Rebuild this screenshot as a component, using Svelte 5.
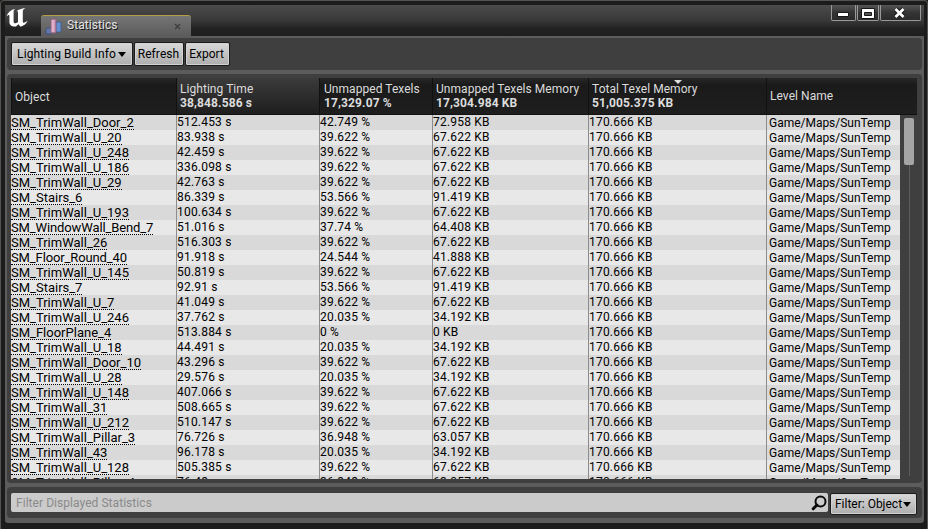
<script>
  const level = 'Game/Maps/SunTemp';
  const total = '170.666 KB';
  const rows = [
    ['SM_TrimWall_Door_2', '512.453 s', '42.749 %', '72.958 KB'],
    ['SM_TrimWall_U_20', '83.938 s', '39.622 %', '67.622 KB'],
    ['SM_TrimWall_U_248', '42.459 s', '39.622 %', '67.622 KB'],
    ['SM_TrimWall_U_186', '336.098 s', '39.622 %', '67.622 KB'],
    ['SM_TrimWall_U_29', '42.763 s', '39.622 %', '67.622 KB'],
    ['SM_Stairs_6', '86.339 s', '53.566 %', '91.419 KB'],
    ['SM_TrimWall_U_193', '100.634 s', '39.622 %', '67.622 KB'],
    ['SM_WindowWall_Bend_7', '51.016 s', '37.74 %', '64.408 KB'],
    ['SM_TrimWall_26', '516.303 s', '39.622 %', '67.622 KB'],
    ['SM_Floor_Round_40', '91.918 s', '24.544 %', '41.888 KB'],
    ['SM_TrimWall_U_145', '50.819 s', '39.622 %', '67.622 KB'],
    ['SM_Stairs_7', '92.91 s', '53.566 %', '91.419 KB'],
    ['SM_TrimWall_U_7', '41.049 s', '39.622 %', '67.622 KB'],
    ['SM_TrimWall_U_246', '37.762 s', '20.035 %', '34.192 KB'],
    ['SM_FloorPlane_4', '513.884 s', '0 %', '0 KB'],
    ['SM_TrimWall_U_18', '44.491 s', '20.035 %', '34.192 KB'],
    ['SM_TrimWall_Door_10', '43.296 s', '39.622 %', '67.622 KB'],
    ['SM_TrimWall_U_28', '29.576 s', '20.035 %', '34.192 KB'],
    ['SM_TrimWall_U_148', '407.066 s', '39.622 %', '67.622 KB'],
    ['SM_TrimWall_31', '508.665 s', '39.622 %', '67.622 KB'],
    ['SM_TrimWall_U_212', '510.147 s', '39.622 %', '67.622 KB'],
    ['SM_TrimWall_Pillar_3', '76.726 s', '36.948 %', '63.057 KB'],
    ['SM_TrimWall_43', '96.178 s', '20.035 %', '34.192 KB'],
    ['SM_TrimWall_U_128', '505.385 s', '39.622 %', '67.622 KB'],
    ['SM_TrimWall_Pillar_4', '76.48 s', '36.948 %', '63.057 KB']
  ];
  const headers = [
    ['Object', ''],
    ['Lighting Time', '38,848.586 s'],
    ['Unmapped Texels', '17,329.07 %'],
    ['Unmapped Texels Memory', '17,304.984 KB'],
    ['Total Texel Memory', '51,005.375 KB'],
    ['Level Name', '']
  ];
  const tight = (name) => /Bend|Round/.test(name);
</script>

<div class="window">
  <div class="titlebar">
    <svg class="logo" width="23" height="20" viewBox="0 0 23 20">
      <path d="M0.4 8.6C1.8 4.6 4.8 1.7 9.4 0.8C7.9 1.8 7.6 2.5 7.6 4V13.4C7.6 15.6 9.8 15.8 12 13.9V4.6C12 3.2 11.4 2.9 10.4 3.4C12.6 1.4 15.4 0.9 19.4 0.1C17.2 1.6 16.8 2.2 16.8 3.8V13.2C16.8 15.4 18.6 15.2 21.8 12.6C20 16.4 17.6 17.9 14.6 18.7L12.4 16.3L10 18.5C5.8 18.9 3.4 16.9 3.4 13.9V7.7C3.4 6.4 1.8 6.7 0.4 8.6Z" />
    </svg>
    <div class="tab">
      <svg width="18" height="18" viewBox="0 0 18 18">
        <path d="M1 12l1-1h5v5l-1 1H1z" fill="#6177a9" stroke="#34476f" stroke-width=".7" />
        <path d="M11 6l1-1h4v9l-1 1h-4z" fill="#6590d0" stroke="#385887" stroke-width=".7" />
        <path d="M6 3l1-1h4v13l-1 1H6z" fill="#b97f9f" stroke="#8f6384" stroke-width=".7" />
        <path d="M6.6 3h3v12h-3z" fill="#e0afc9" />
      </svg>
      <span>Statistics</span>
      <svg class="tabclose" width="7" height="7" viewBox="0 0 7 7"><path d="M1 1l5 5M6 1L1 6" /></svg>
    </div>
    <div class="controls">
      <div><svg width="12" height="5" viewBox="0 0 12 5"><path d="M.5.5h11v4H.5z" fill="#fff" stroke="#161616" /></svg></div>
      <div><svg width="14" height="11" viewBox="0 0 14 11"><path d="M.5.5h13v10H.5z" fill="#fff" stroke="#161616" /><path d="M3.5 4.5h7v3h-7z" fill="#555" stroke="#161616" /></svg></div>
      <div><svg width="13" height="12" viewBox="0 0 13 12"><path d="M2.5 2l8 8M10.5 2l-8 8" stroke="#161616" stroke-width="4.8" /><path d="M2.5 2l8 8M10.5 2l-8 8" stroke="#fff" stroke-width="2.8" /></svg></div>
    </div>
  </div>

  <div class="body">
    <div class="panel toolbar">
      <button class="info">Lighting Build Info<i></i></button>
      <button class="refresh">Refresh</button>
      <button class="export">Export</button>
    </div>

    <div class="panel main">
      <div class="head cols">
        {#each headers as [name, sum], i}
          <div class="h" class:lit={i === 1} class:wide={i === 2}>
            <span>{name}</span>
            {#if sum}<b>{sum}</b>{/if}
            {#if i === 4}<em></em>{/if}
          </div>
        {/each}
      </div>
      <div class="area">
        <div class="list">
          {#each rows as r}
            <div class="row cols">
              <div class="c obj" class:tight={tight(r[0])}><span>{r[0]}</span></div>
              <div class="c">{r[1]}</div>
              <div class="c">{r[2]}</div>
              <div class="c">{r[3]}</div>
              <div class="c">{total}</div>
              <div class="c lvl">{level}</div>
            </div>
          {/each}
        </div>
        <div class="scroll"><div class="thumb"></div><div class="track"></div></div>
      </div>
    </div>

    <div class="panel foot">
      <div class="search">
        <span>Filter Displayed Statistics</span>
        <svg width="16" height="16" viewBox="0 0 16 16"><circle cx="9.5" cy="6.4" r="5" fill="none" stroke="#0a0a0a" stroke-width="2" /><path d="M6 10L2.2 13.8" stroke="#0a0a0a" stroke-width="3" stroke-linecap="round" /></svg>
      </div>
      <button class="filter">Filter: Object<i></i></button>
    </div>
  </div>
</div>

<style>
  :global(body) { margin: 0; background: #1b1b1b; }
  .window {
    width: 928px; height: 529px; box-sizing: border-box;
    display: flex; flex-direction: column; overflow: hidden;
    background: #1c1c1c; border: 1px solid #53534f; border-bottom: 0;
    border-radius: 4px 4px 0 0;
    padding: 4px 3px 6px 4px;
    font: 12px/15px Roboto, sans-serif; color: #000;
  }
  .titlebar {
    height: 31px; flex: none; display: flex; align-items: flex-start;
    background: linear-gradient(#4b4b4b, #383838 50%, #222 75%, #1e1e1e);
  }
  .logo { margin: 3px 13px 0 1px; fill: #fff; flex: none; }
  .tab {
    width: 150px; height: 21px; margin: 10px 0 0 -1px; box-sizing: border-box;
    border-top: 1px solid #b59d45; border-radius: 3px 3px 0 0;
    background: linear-gradient(#757575, #5c5c5c); display: flex; align-items: flex-start;
    color: #e6e6e6; text-shadow: 1px 1px 0 #111; padding-left: 4px;
  }
  .tab span { margin: 2px 0 0 4px; letter-spacing: .07px; width: 107px; }
  .tab > svg:first-child { margin-top: 1px; }
  .tabclose { margin-top: 7px; stroke: #3c3c3c; stroke-width: 1.2; }
  .controls { display: flex; margin-left: auto; margin-right: 3px; gap: 1px; }
  .controls div {
    height: 15px; width: 23px; border: 1px solid #999; border-top: 0; border-radius: 0 0 2px 2px;
    background: linear-gradient(#555, #353535 50%, #2a2a2a); display: flex; align-items: center; justify-content: center;
  }
  .controls div:nth-child(1) svg { margin: 4px 2px 0 0; }
  .controls div:nth-child(2) { width: 20px; }
  .controls div:nth-child(2) svg { margin: 2px 0 0; }
  .controls div:nth-child(3) { width: 39px; }
  .controls div:nth-child(3) svg { margin-right: 3px; }
  .body {
    flex: 1; min-height: 0; background: #5c5c5c; padding: 2px 2px 5px; border-radius: 0 0 3px 3px;
    display: flex; flex-direction: column;
  }
  .panel { background: #3f3f3f; border-radius: 4px; box-sizing: border-box; flex: none; }
  .toolbar { height: 32px; margin-bottom: 4px; display: flex; padding: 4px 4px 0; gap: 1px; }
  button {
    font: 12px/15px Roboto, sans-serif; color: #000; box-sizing: border-box; margin: 0;
    border: 1px solid #1c1c1c; border-radius: 2px; height: 24px; padding: 0;
    background: linear-gradient(#d9d9d9, #adadad); box-shadow: inset 0 0 0 1px #d2d2d2;
    display: flex; align-items: center; justify-content: center; white-space: nowrap;
  }
  button i { border: 4.5px solid transparent; border-top: 5px solid #000; border-bottom: 0; margin-left: 1px; }
  .info { width: 122px; letter-spacing: .12px; padding-right: 1px; }
  .info i { margin-left: 2px; }
  .refresh { width: 50px; padding-right: 1px; letter-spacing: .08px; }
  .export { width: 45px; padding-right: 2px; }
  .main { height: 409px; padding: 4px; margin-bottom: 4px; }
  .cols { display: grid; grid-template-columns: 165px 143px 113px 156px 178px 1fr; }
  .head { height: 37px; width: 906px; background: linear-gradient(#282828, #1a1a1a 20%, #1e1e1e); border-bottom: 1px solid #111; box-sizing: border-box; }
  .h {
    border-left: 1px solid #111; box-sizing: border-box; padding: 4px 0 0 3px; position: relative;
    display: flex; flex-direction: column; color: #dcdcdc; line-height: 14px; white-space: nowrap; letter-spacing: .05px;
  }
  .h:first-child { padding-top: 12px; }
  .h:last-child { padding-top: 11px; }
  .h.wide { padding-left: 4px; }
  .h.lit { background: linear-gradient(#3b3b3b, #1e1e1e); }
  .h b { font-size: 12px; letter-spacing: .12px; }
  .h em { position: absolute; left: 85px; top: 2px; border: 4px solid transparent; border-top-color: #ddd; border-bottom: 0; }
  .area { display: flex; height: 364px; }
  .list { width: 889px; overflow: hidden; }
  .row { height: 15px; background: #d9d9d9; }
  .row:nth-child(even) { background: #e8e8e8; }
  .c { border-left: 1px solid #8c8c8c; white-space: nowrap; line-height: 15px; height: 15px; letter-spacing: .2px; }
  .c.obj { border: 0; font-size: 13px; letter-spacing: 0; }
  .c.obj.tight { letter-spacing: -.12px; }
  .obj span { display: inline-block; height: 14px; line-height: 16px; border-bottom: 1px dotted #000; }
  .c.lvl { padding-left: 2px; line-height: 16px; letter-spacing: -.02px; }
  .scroll { flex: 1; padding-left: 4px; padding-top: 3px; }
  .thumb { width: 10px; height: 47px; background: #a5a5a5; border-radius: 2px; }
  .track { width: 1px; margin-left: 5px; height: 311px; background: #5c5c5c; }
  .foot { height: 31px; display: flex; padding: 6px 4px 0; gap: 2px; }
  .search {
    width: 817px; height: 19px; background: #cbcbcb; border-radius: 2px; display: flex; justify-content: space-between;
    align-items: flex-start; color: #8a8a8a; padding: 2px 1px 0 5px; box-sizing: border-box; letter-spacing: .05px;
  }
  .search span { margin-top: 1px; }
  .filter { width: 87px; height: 22px; padding-right: 1px; }
</style>
